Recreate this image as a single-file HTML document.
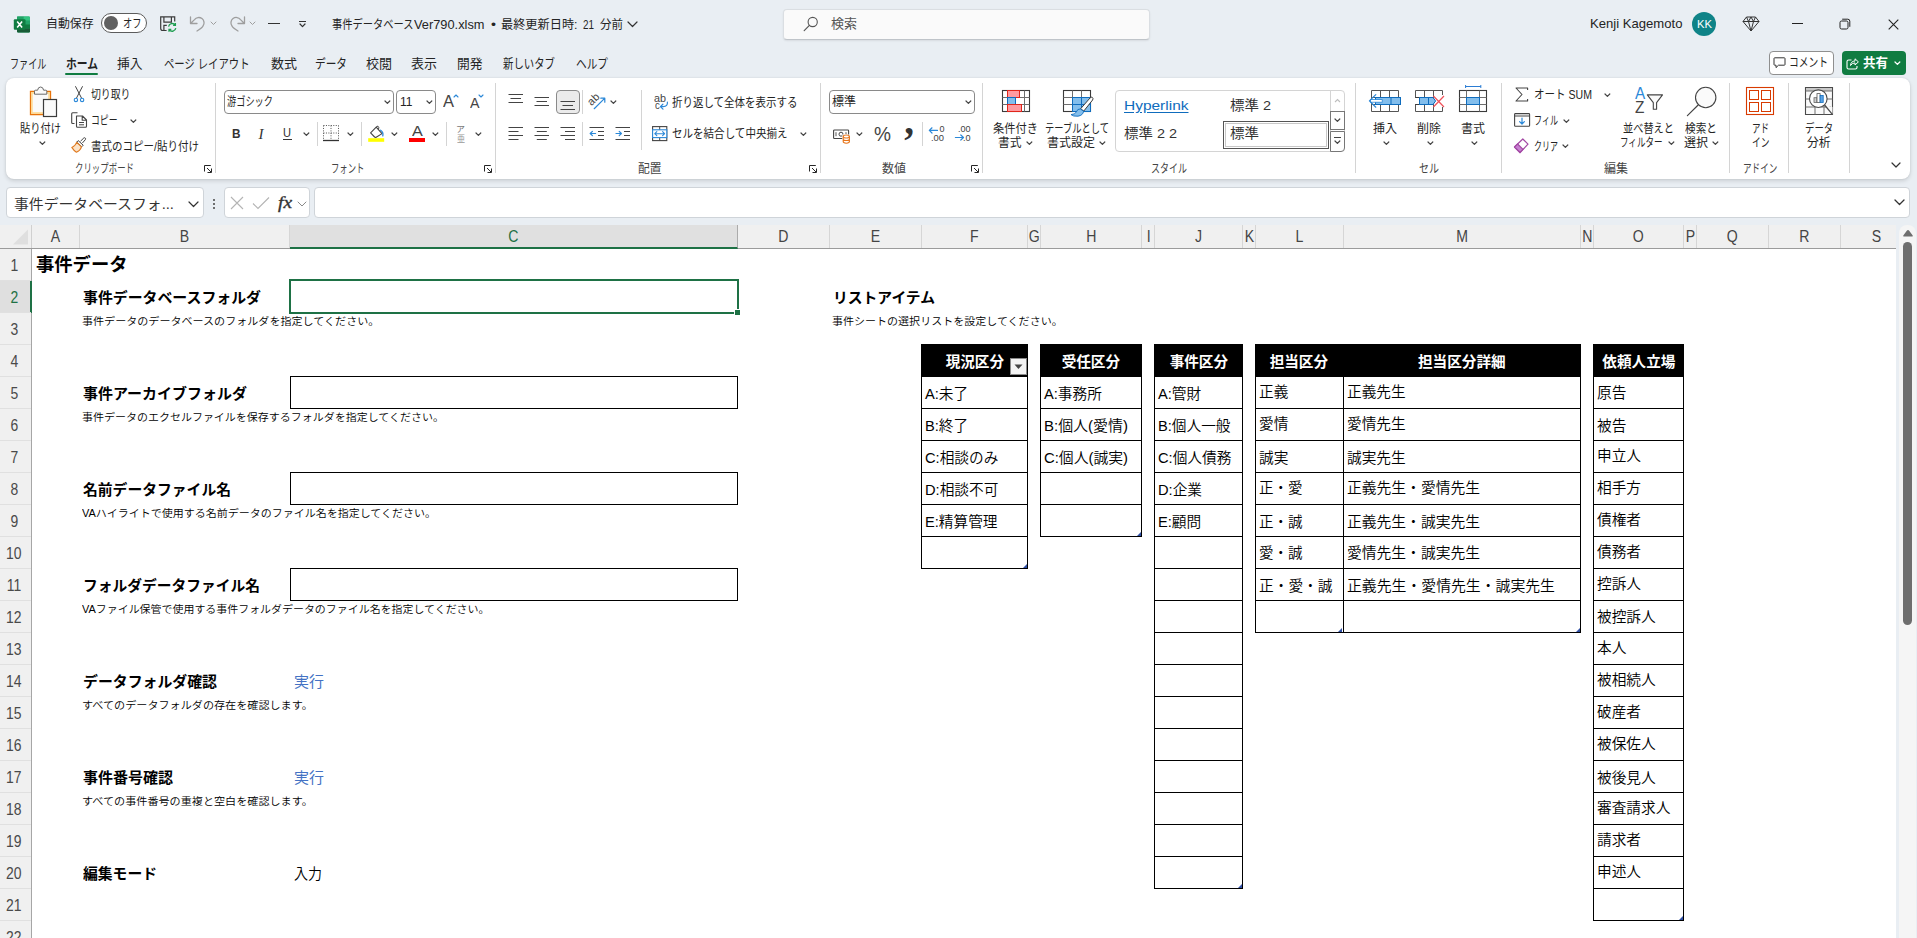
<!DOCTYPE html><html lang="ja"><head><meta charset="utf-8"><title>事件データベースVer790.xlsm - Excel</title><style>
html,body{margin:0;padding:0}
body{width:1917px;height:938px;overflow:hidden;position:relative;background:#e9eef3;font-family:"Liberation Sans","Noto Sans CJK JP",sans-serif;-webkit-font-smoothing:antialiased}
body>div,body>svg,body>span{position:absolute;box-sizing:border-box}
.t{white-space:nowrap;transform-origin:0 50%;display:block}
svg{overflow:visible}
</style></head><body><svg style="left:13px;top:15.5px;" width="18" height="17" viewBox="0 0 18 17" fill="none"><rect x="4" y="0.5" width="13" height="16" rx="1.2" fill="#21a366"/><rect x="4" y="0.5" width="6.8" height="4.2" fill="#21a366"/><path d="M10.6 0.5 H15.8 Q17 0.5 17 1.7 V4.7 H10.6 Z" fill="#33c481"/><rect x="4" y="4.6" width="6.8" height="4" fill="#107c41"/><rect x="10.6" y="4.6" width="6.4" height="4" fill="#21a366"/><rect x="4" y="8.5" width="6.8" height="4" fill="#185c37"/><rect x="10.6" y="8.5" width="6.4" height="4" fill="#107c41"/><path d="M4 12.4 H17 V15.3 Q17 16.5 15.8 16.5 H5.2 Q4 16.5 4 15.3 Z" fill="#185c37"/><rect x="0.8" y="3.3" width="11.7" height="10.4" rx="1" fill="#107c41"/><path d="M4.2 5.6 L9.1 11.4 M9.1 5.6 L4.2 11.4" stroke="#fff" stroke-width="1.6"/></svg>
<span class="t" style="left:46px;top:14.7px;line-height:19px;font-size:12.5px;font-weight:400;color:#242424;transform:scaleX(0.9517);">自動保存</span>
<div style="left:101px;top:13px;width:46px;height:20px;border:1.2px solid #5c5c5c;border-radius:10px;background:#fff"></div>
<div style="left:104px;top:16.1px;width:13.8px;height:13.8px;background:#616161;border-radius:50%"></div>
<span class="t" style="left:123px;top:15.0px;line-height:18px;font-size:12px;font-weight:400;color:#242424;transform:scaleX(0.7703);">オフ</span>
<svg style="left:160px;top:15px;" width="17" height="18" viewBox="0 0 17 18" fill="none"><path d="M6.6 15.5 H2.8 Q0.7 15.5 0.7 13.6 V1.9 H14.7 V6.4" stroke="#3b3b3b" stroke-width="1.2"/><path d="M3.9 2 V7.1 H11.4 V2" stroke="#3b3b3b" stroke-width="1.2"/><path d="M3.9 15.4 V10.4 H6.8" stroke="#3b3b3b" stroke-width="1.2"/><path d="M8.6 11.6 A3.7 3.7 0 0 1 15.1 9.9 M15.4 8.1 V10.4 H13.1 M15.8 13.2 A3.7 3.7 0 0 1 9.3 14.9 M9 16.7 V14.4 H11.3" stroke="#1e9e50" stroke-width="1.3"/></svg>
<svg style="left:189px;top:15px;" width="18" height="17" viewBox="0 0 18 17" fill="none"><path d="M1.5 2 V8.5 H8 M1.8 8.2 L5.5 4.6 A5.3 5.3 0 0 1 14 11 Q13 13 8 16" stroke="#9e9e9e" stroke-width="1.3" stroke-linecap="round" stroke-linejoin="round"/></svg>
<svg style="left:210.0px;top:21.25px;" width="7" height="4.5" viewBox="0 0 7 4.5" fill="none"><path d="M1 1 L3.5 3.5 L6 1" stroke="#9e9e9e" stroke-width="1" stroke-linecap="round" stroke-linejoin="round"/></svg>
<svg style="left:228px;top:15px;" width="18" height="17" viewBox="0 0 18 17" fill="none"><path d="M16.5 2 V8.5 H10 M16.2 8.2 L12.5 4.6 A5.3 5.3 0 0 0 4 11 Q5 13 10 16" stroke="#9e9e9e" stroke-width="1.3" stroke-linecap="round" stroke-linejoin="round"/></svg>
<svg style="left:249.0px;top:21.25px;" width="7" height="4.5" viewBox="0 0 7 4.5" fill="none"><path d="M1 1 L3.5 3.5 L6 1" stroke="#9e9e9e" stroke-width="1" stroke-linecap="round" stroke-linejoin="round"/></svg>
<div style="left:267.5px;top:23px;width:12px;height:1.3px;background:#333"></div>
<div style="left:299px;top:20.5px;width:7px;height:1.2px;background:#333"></div>
<svg style="left:299.0px;top:23.2px;" width="7" height="4.6" viewBox="0 0 7 4.6" fill="none"><path d="M1 1 L3.5 3.6 L6 1" stroke="#333" stroke-width="1.2" stroke-linecap="round" stroke-linejoin="round"/></svg>
<span class="t" style="left:331.5px;top:15.5px;line-height:19px;font-size:12.5px;font-weight:400;color:#242424;transform:scaleX(0.8200);">事件データベース</span>
<span class="t" style="left:413.5px;top:15.0px;line-height:20px;font-size:13px;font-weight:400;color:#242424;transform:scaleX(0.9854);">Ver790.xlsm</span>
<span class="t" style="left:490.5px;top:15.5px;line-height:19px;font-size:12.5px;font-weight:400;color:#242424;transform:scaleX(1.1388);">•</span>
<span class="t" style="left:501px;top:15.5px;line-height:19px;font-size:12.5px;font-weight:400;color:#242424;transform:scaleX(0.9747);">最終更新日時:</span>
<span class="t" style="left:582.5px;top:15.0px;line-height:20px;font-size:13px;font-weight:400;color:#242424;transform:scaleX(0.7603);">21</span>
<span class="t" style="left:599.5px;top:15.5px;line-height:19px;font-size:12.5px;font-weight:400;color:#242424;transform:scaleX(0.9194);">分前</span>
<svg style="left:627.0px;top:20.75px;" width="11" height="6.5" viewBox="0 0 11 6.5" fill="none"><path d="M1 1 L5.5 5.5 L10 1" stroke="#333" stroke-width="1.2" stroke-linecap="round" stroke-linejoin="round"/></svg>
<div style="left:782.5px;top:8.5px;width:367px;height:31px;background:#fafafa;border-radius:4px;border:1px solid #dadee2;border-bottom-color:#bfc4c9;box-shadow:0 1px 2px rgba(0,0,0,.08)"></div>
<svg style="left:803px;top:16px;" width="16" height="16" viewBox="0 0 16 16" fill="none"><circle cx="9.7" cy="6" r="4.6" stroke="#555" stroke-width="1.1"/><path d="M6.4 9.4 L1.2 14.6" stroke="#555" stroke-width="1.2" stroke-linecap="round"/></svg>
<span class="t" style="left:831px;top:13.5px;line-height:20px;font-size:13px;font-weight:400;color:#555;transform:scaleX(0.9994);">検索</span>
<span class="t" style="left:1590px;top:14.0px;line-height:20px;font-size:13px;font-weight:400;color:#242424;transform:scaleX(1.0078);">Kenji Kagemoto</span>
<div style="left:1691.5px;top:11.5px;width:24px;height:24px;background:#0f8387;border-radius:50%"></div>
<span class="t" style="left:1703.5px;top:16.0px;line-height:16px;font-size:10.5px;font-weight:400;color:#fff;transform:translateX(-50%) scaleX(1.0702);">KK</span>
<svg style="left:1742px;top:15.5px;" width="18" height="16" viewBox="0 0 18 16" fill="none"><path d="M4.5 1 H13.5 L17 5.5 L9 15 L1 5.5 Z M1 5.5 H17 M4.5 1 L6.5 5.5 L9 15 L11.5 5.5 L13.5 1 M6.5 5.5 L9 1 L11.5 5.5" stroke="#333" stroke-width="1" stroke-linejoin="round"/></svg>
<div style="left:1792px;top:23.3px;width:11px;height:1.1px;background:#222"></div>
<svg style="left:1839px;top:18px;" width="12" height="12" viewBox="0 0 12 12" fill="none"><rect x="1" y="3" width="8" height="8" rx="1.6" stroke="#222" stroke-width="1"/><path d="M3.2 1.2 H8.8 Q10.8 1.2 10.8 3.2 V8.8" stroke="#222" stroke-width="1"/></svg>
<svg style="left:1887.5px;top:18.5px;" width="11" height="11" viewBox="0 0 11 11" fill="none"><path d="M0.7 0.7 L10.3 10.3 M10.3 0.7 L0.7 10.3" stroke="#222" stroke-width="1.1"/></svg>
<span class="t" style="left:10px;top:54.0px;line-height:20px;font-size:13px;font-weight:400;color:#242424;transform:scaleX(0.7017);">ファイル</span>
<span class="t" style="left:65.5px;top:54.0px;line-height:20px;font-size:13px;font-weight:700;color:#242424;transform:scaleX(0.8285);">ホーム</span>
<span class="t" style="left:117px;top:54.0px;line-height:20px;font-size:13px;font-weight:400;color:#242424;transform:scaleX(0.9802);">挿入</span>
<span class="t" style="left:163.5px;top:54.0px;line-height:20px;font-size:13px;font-weight:400;color:#242424;transform:scaleX(0.7964);">ページ レイアウト</span>
<span class="t" style="left:270.5px;top:54.0px;line-height:20px;font-size:13px;font-weight:400;color:#242424;transform:scaleX(0.9994);">数式</span>
<span class="t" style="left:315px;top:54.0px;line-height:20px;font-size:13px;font-weight:400;color:#242424;transform:scaleX(0.8202);">データ</span>
<span class="t" style="left:366px;top:54.0px;line-height:20px;font-size:13px;font-weight:400;color:#242424;transform:scaleX(0.9994);">校閲</span>
<span class="t" style="left:411px;top:54.0px;line-height:20px;font-size:13px;font-weight:400;color:#242424;transform:scaleX(0.9994);">表示</span>
<span class="t" style="left:456.5px;top:54.0px;line-height:20px;font-size:13px;font-weight:400;color:#242424;transform:scaleX(0.9802);">開発</span>
<span class="t" style="left:503px;top:54.0px;line-height:20px;font-size:13px;font-weight:400;color:#242424;transform:scaleX(0.7998);">新しいタブ</span>
<span class="t" style="left:576px;top:54.0px;line-height:20px;font-size:13px;font-weight:400;color:#242424;transform:scaleX(0.8202);">ヘルプ</span>
<div style="left:65px;top:72.8px;width:33px;height:2.2px;background:#107c41;border-radius:1px"></div>
<div style="left:1769px;top:51px;width:64.5px;height:24px;background:#fff;border:1px solid #8f8f8f;border-radius:4px"></div>
<svg style="left:1773px;top:57px;" width="13" height="12" viewBox="0 0 13 12" fill="none"><path d="M1 1.5 Q1 0.8 1.7 0.8 H11.3 Q12 0.8 12 1.5 V7.5 Q12 8.2 11.3 8.2 H5.5 L3 10.6 V8.2 H1.7 Q1 8.2 1 7.5 Z" stroke="#333" stroke-width="1" stroke-linejoin="round"/></svg>
<span class="t" style="left:1788.5px;top:53.5px;line-height:19px;font-size:12.5px;font-weight:400;color:#242424;transform:scaleX(0.7798);">コメント</span>
<div style="left:1841.5px;top:51px;width:64px;height:24px;background:#107c41;border-radius:4px"></div>
<svg style="left:1845.5px;top:56.5px;" width="13" height="13" viewBox="0 0 13 13" fill="none"><path d="M5.5 3 H2.6 Q1 3 1 4.6 V10.4 Q1 12 2.6 12 H9.4 Q11 12 11 10.4 V9" stroke="#fff" stroke-width="1.1"/><path d="M4.5 8.5 Q4.8 4.2 9 4 V1.8 L12.4 4.9 L9 8 V5.9 Q6 6 4.5 8.5 Z" stroke="#fff" stroke-width="1" stroke-linejoin="round"/></svg>
<span class="t" style="left:1862.5px;top:53.0px;line-height:20px;font-size:13px;font-weight:700;color:#fff;transform:scaleX(0.9610);">共有</span>
<svg style="left:1894.3px;top:61.3px;" width="6.8" height="4.4" viewBox="0 0 6.8 4.4" fill="none"><path d="M1 1 L3.4 3.4 L5.8 1" stroke="#fff" stroke-width="1.3" stroke-linecap="round" stroke-linejoin="round"/></svg>
<div style="left:6px;top:78px;width:1904px;height:101px;background:#fff;border-radius:8px;box-shadow:0 2px 4px rgba(0,0,0,.13),0 0 2px rgba(0,0,0,.10)"></div>
<div style="left:6px;top:187px;width:197.5px;height:30.5px;background:#fff;border-radius:4px;border:1px solid #cfd4d9"></div>
<span class="t" style="left:13.5px;top:194.0px;line-height:21px;font-size:14px;font-weight:400;color:#333;transform:scaleX(1.0598);">事件データベースフォ...</span>
<svg style="left:188.0px;top:201.25px;" width="11" height="6.5" viewBox="0 0 11 6.5" fill="none"><path d="M1 1 L5.5 5.5 L10 1" stroke="#333" stroke-width="1.2" stroke-linecap="round" stroke-linejoin="round"/></svg>
<div style="left:212.5px;top:199px;width:2px;height:2px;background:#444;border-radius:50%"></div>
<div style="left:212.5px;top:203px;width:2px;height:2px;background:#444;border-radius:50%"></div>
<div style="left:212.5px;top:207px;width:2px;height:2px;background:#444;border-radius:50%"></div>
<div style="left:224px;top:187px;width:85.5px;height:30.5px;background:#fff;border-radius:4px;border:1px solid #cfd4d9"></div>
<svg style="left:230px;top:196px;" width="14" height="14" viewBox="0 0 14 14" fill="none"><path d="M1 1 L13 13 M13 1 L1 13" stroke="#b4b4b4" stroke-width="1.1"/></svg>
<svg style="left:252px;top:196px;" width="18" height="14" viewBox="0 0 18 14" fill="none"><path d="M1 7.5 L6 12.5 L17 1.5" stroke="#b4b4b4" stroke-width="1.1"/></svg>
<span class="t" style="left:277.5px;top:190.5px;line-height:24px;font-size:16px;font-weight:400;color:#333;transform:scaleX(1.2124);font-family:'Liberation Serif',serif;-webkit-text-stroke:0.35px #333;"><i>fx</i></span>
<svg style="left:296.7px;top:201.0px;" width="10" height="6" viewBox="0 0 10 6" fill="none"><path d="M1 1 L5.0 5 L9 1" stroke="#8a8a8a" stroke-width="1" stroke-linecap="round" stroke-linejoin="round"/></svg>
<div style="left:314px;top:187px;width:1595.5px;height:30.5px;background:#fff;border-radius:4px;border:1px solid #cfd4d9"></div>
<svg style="left:1894.0px;top:198.75px;" width="11" height="6.5" viewBox="0 0 11 6.5" fill="none"><path d="M1 1 L5.5 5.5 L10 1" stroke="#333" stroke-width="1.3" stroke-linecap="round" stroke-linejoin="round"/></svg>
<svg style="left:29px;top:86px;" width="29" height="31" viewBox="0 0 29 31" fill="none"><path d="M14.5 28.5 H1.5 V5.5 H21.5 V13" stroke="#e8740c" stroke-width="1.3" fill="#fafafa"/><path d="M14 27.1 H2.9 V6.9 H20.1 V13" stroke="#ffd88a" stroke-width="1.5"/><path d="M5.5 8.2 V5.2 Q5.5 4.2 6.5 4.2 H8.6 Q9 1 11.6 1 Q14.2 1 14.6 4.2 H16.8 Q17.8 4.2 17.8 5.2 V8.2 Z" stroke="#6a6a6a" stroke-width="1" fill="#fafafa"/><rect x="14.5" y="13.5" width="13" height="17" stroke="#3b3b3b" stroke-width="1.2" fill="#fafafa"/></svg>
<span class="t" style="left:20px;top:120.19999999999999px;line-height:18px;font-size:12px;font-weight:400;color:#242424;transform:scaleX(0.8539);">貼り付け</span>
<svg style="left:39.300000000000004px;top:141.0px;" width="6.8" height="4.4" viewBox="0 0 6.8 4.4" fill="none"><path d="M1 1 L3.4 3.4 L5.8 1" stroke="#444" stroke-width="1.2" stroke-linecap="round" stroke-linejoin="round"/></svg>
<svg style="left:72px;top:86px;" width="14" height="17" viewBox="0 0 14 17" fill="none"><path d="M3.6 0.6 L9.6 12.2 M10.4 0.6 L4.4 12.2" stroke="#444" stroke-width="1" stroke-linecap="round"/><circle cx="3.9" cy="13.9" r="1.7" stroke="#2b88d8" stroke-width="1.1" fill="#fff"/><circle cx="10.1" cy="13.9" r="1.7" stroke="#2b88d8" stroke-width="1.1" fill="#fff"/></svg>
<span class="t" style="left:91px;top:86.2px;line-height:18px;font-size:12px;font-weight:400;color:#242424;transform:scaleX(0.8226);">切り取り</span>
<svg style="left:71px;top:112px;" width="17" height="16" viewBox="0 0 17 16" fill="none"><path d="M3.5 11.5 H1.7 Q0.7 11.5 0.7 10.5 V1.7 Q0.7 0.7 1.7 0.7 H6.5" stroke="#444" stroke-width="1.1"/><path d="M5.5 4 H11.5 L15.5 8 V14.3 Q15.5 15.3 14.5 15.3 H6.5 Q5.5 15.3 5.5 14.3 Z M11.2 4.2 V8.2 H15.3" stroke="#444" stroke-width="1.1" fill="#fff" stroke-linejoin="round"/><path d="M8 10.5 H13 M8 12.8 H13" stroke="#444" stroke-width="1"/></svg>
<span class="t" style="left:90.5px;top:112.2px;line-height:18px;font-size:12px;font-weight:400;color:#242424;transform:scaleX(0.7358);">コピー</span>
<svg style="left:129.9px;top:118.6px;" width="6.8" height="4.4" viewBox="0 0 6.8 4.4" fill="none"><path d="M1 1 L3.4 3.4 L5.8 1" stroke="#444" stroke-width="1.2" stroke-linecap="round" stroke-linejoin="round"/></svg>
<svg style="left:71px;top:137px;" width="16" height="16" viewBox="0 0 16 16" fill="none"><path d="M9.5 4.2 L12.8 1 Q13.6 0.4 14.3 1.1 Q15 1.8 14.4 2.6 L11.4 6" stroke="#444" stroke-width="1"/><path d="M7.2 3.6 L12.2 8.2 L10.7 9.8 L5.7 5.2 Z" stroke="#444" stroke-width="1" fill="#fff"/><path d="M5.7 5.4 L10.5 9.9 Q9.2 13.8 5.4 15.2 Q2.6 13.4 0.8 10.4 Q4.2 9.2 5.7 5.4 Z" stroke="#e07a1f" stroke-width="1.1" fill="#fbe3c8" stroke-linejoin="round"/></svg>
<span class="t" style="left:90.5px;top:137.7px;line-height:18px;font-size:12px;font-weight:400;color:#242424;transform:scaleX(0.8756);">書式のコピー/貼り付け</span>
<span class="t" style="left:75px;top:159.5px;line-height:18px;font-size:12px;font-weight:400;color:#444;transform:scaleX(0.7023);">クリップボード</span>
<svg style="left:204px;top:165px;" width="8" height="8" viewBox="0 0 8 8" fill="none"><path d="M0.5 6.5 V0.5 H6.8 M3 3 L7 7 M7.5 3.5 V7.5 H3.5" stroke="#262626" stroke-width="1"/></svg>
<div style="left:215px;top:83px;width:1px;height:90px;background:#d4d4d4"></div>
<div style="left:224px;top:90px;width:169.5px;height:24px;border:1px solid #8a8a8a;border-radius:4px;background:#fff"></div>
<span class="t" style="left:226.5px;top:93.2px;line-height:18px;font-size:12px;font-weight:400;color:#242424;transform:scaleX(0.7665);">游ゴシック</span>
<svg style="left:383.6px;top:99.8px;" width="6.8" height="4.4" viewBox="0 0 6.8 4.4" fill="none"><path d="M1 1 L3.4 3.4 L5.8 1" stroke="#444" stroke-width="1.2" stroke-linecap="round" stroke-linejoin="round"/></svg>
<div style="left:395.5px;top:90px;width:40px;height:24px;border:1px solid #8a8a8a;border-radius:4px;background:#fff"></div>
<span class="t" style="left:399.5px;top:91.5px;line-height:20px;font-size:13px;font-weight:400;color:#242424;transform:scaleX(0.9259);">11</span>
<svg style="left:425.6px;top:99.8px;" width="6.8" height="4.4" viewBox="0 0 6.8 4.4" fill="none"><path d="M1 1 L3.4 3.4 L5.8 1" stroke="#444" stroke-width="1.2" stroke-linecap="round" stroke-linejoin="round"/></svg>
<span class="t" style="left:442.5px;top:88.5px;line-height:26px;font-size:17px;font-weight:400;color:#444;transform:scaleX(0.9697);">A</span>
<svg style="left:452.7px;top:94px;" width="6" height="4" viewBox="0 0 6 4" fill="none"><path d="M1 3 L3 1 L5 3" stroke="#2b88d8" stroke-width="1.1" stroke-linecap="round" stroke-linejoin="round"/></svg>
<span class="t" style="left:470px;top:91.5px;line-height:22px;font-size:14.5px;font-weight:400;color:#444;transform:scaleX(0.9822);">A</span>
<svg style="left:478.4px;top:94.3px;" width="6" height="4" viewBox="0 0 6 4" fill="none"><path d="M1 1 L3.0 3 L5 1" stroke="#2b88d8" stroke-width="1.1" stroke-linecap="round" stroke-linejoin="round"/></svg>
<span class="t" style="left:232px;top:123.5px;line-height:20px;font-size:13.5px;font-weight:700;color:#333;transform:scaleX(0.8718);">B</span>
<span class="t" style="left:258.5px;top:122.5px;line-height:22px;font-size:15px;font-weight:400;color:#333;font-family:'Liberation Serif',serif;"><i>I</i></span>
<span class="t" style="left:283px;top:123.0px;line-height:20px;font-size:13px;font-weight:400;color:#333;transform:scaleX(0.8519);">U</span>
<div style="left:282.5px;top:139px;width:9px;height:1px;background:#333"></div>
<svg style="left:302.6px;top:132.3px;" width="6.8" height="4.4" viewBox="0 0 6.8 4.4" fill="none"><path d="M1 1 L3.4 3.4 L5.8 1" stroke="#444" stroke-width="1.2" stroke-linecap="round" stroke-linejoin="round"/></svg>
<div style="left:317px;top:122px;width:1px;height:23.5px;background:#d4d4d4"></div>
<svg style="left:323px;top:125px;" width="16" height="16" viewBox="0 0 16 16" fill="none"><path d="M0.5 0.5 H15.5 M0.5 0.5 V15 M15.5 0.5 V15 M8 0.5 V15 M0.5 8 H15.5" stroke="#555" stroke-width="1" stroke-dasharray="1 1.45"/><path d="M0 15.5 H16" stroke="#333" stroke-width="1.3"/></svg>
<svg style="left:346.6px;top:132.3px;" width="6.8" height="4.4" viewBox="0 0 6.8 4.4" fill="none"><path d="M1 1 L3.4 3.4 L5.8 1" stroke="#444" stroke-width="1.2" stroke-linecap="round" stroke-linejoin="round"/></svg>
<div style="left:361px;top:122px;width:1px;height:23.5px;background:#d4d4d4"></div>
<svg style="left:368px;top:125px;" width="17" height="18" viewBox="0 0 17 18" fill="none"><path d="M2.6 7.8 L8.2 2.2 L14 8.6 L8.2 12.2 Q7.4 12.6 6.6 12 Z" stroke="#444" stroke-width="1.1" fill="#fff" stroke-linejoin="round"/><path d="M8.2 2.2 Q8.8 0.6 10.2 1.4 Q11.4 2.4 10.4 4.6" stroke="#444" stroke-width="1"/><path d="M12.6 5.2 Q15.6 7 14.8 10.8" stroke="#2b88d8" stroke-width="1.3" stroke-linecap="round"/><rect x="0.2" y="13.2" width="16" height="3.6" fill="#ffff00"/></svg>
<svg style="left:390.6px;top:132.3px;" width="6.8" height="4.4" viewBox="0 0 6.8 4.4" fill="none"><path d="M1 1 L3.4 3.4 L5.8 1" stroke="#444" stroke-width="1.2" stroke-linecap="round" stroke-linejoin="round"/></svg>
<span class="t" style="left:411.8px;top:120.30000000000001px;line-height:22px;font-size:14.5px;font-weight:400;color:#444;transform:scaleX(1.1166);">A</span>
<div style="left:409px;top:138.2px;width:16px;height:3.6px;background:#ff0000"></div>
<svg style="left:431.6px;top:132.3px;" width="6.8" height="4.4" viewBox="0 0 6.8 4.4" fill="none"><path d="M1 1 L3.4 3.4 L5.8 1" stroke="#444" stroke-width="1.2" stroke-linecap="round" stroke-linejoin="round"/></svg>
<div style="left:445.5px;top:122px;width:1px;height:23.5px;background:#d4d4d4"></div>
<span class="t" style="left:456px;top:123.0px;line-height:13px;font-size:8.5px;font-weight:400;color:#777;transform:scaleX(1.0569);">ア</span>
<span class="t" style="left:456.5px;top:131.5px;line-height:14px;font-size:9px;font-weight:400;color:#999;transform:scaleX(0.8873);">亜</span>
<svg style="left:475.1px;top:132.3px;" width="6.8" height="4.4" viewBox="0 0 6.8 4.4" fill="none"><path d="M1 1 L3.4 3.4 L5.8 1" stroke="#444" stroke-width="1.2" stroke-linecap="round" stroke-linejoin="round"/></svg>
<span class="t" style="left:330.5px;top:159.5px;line-height:18px;font-size:12px;font-weight:400;color:#444;transform:scaleX(0.6977);">フォント</span>
<svg style="left:484px;top:165px;" width="8" height="8" viewBox="0 0 8 8" fill="none"><path d="M0.5 6.5 V0.5 H6.8 M3 3 L7 7 M7.5 3.5 V7.5 H3.5" stroke="#262626" stroke-width="1"/></svg>
<div style="left:495px;top:83px;width:1px;height:90px;background:#d4d4d4"></div>
<svg style="left:508px;top:92px;" width="16" height="16" viewBox="0 0 16 16" fill="none"><path d="M0.5 2.5 H15 M2.5 6.5 H13 M0.5 10.5 H15 " stroke="#444" stroke-width="1.1"/></svg>
<svg style="left:534px;top:92px;" width="16" height="16" viewBox="0 0 16 16" fill="none"><path d="M0.5 5.5 H15 M2.5 9.5 H13 M0.5 13.5 H15 " stroke="#444" stroke-width="1.1"/></svg>
<div style="left:555.5px;top:90px;width:24.5px;height:24px;background:#ebebeb;border:1px solid #8a8a8a;border-radius:4px"></div>
<svg style="left:560px;top:94px;" width="16" height="16" viewBox="0 0 16 16" fill="none"><path d="M0.5 7.5 H15 M2.5 11.5 H13 M0.5 15.5 H15 " stroke="#444" stroke-width="1.1"/></svg>
<div style="left:582px;top:90px;width:1px;height:24px;background:#d4d4d4"></div>
<svg style="left:588px;top:92px;" width="18" height="18" viewBox="0 0 18 18" fill="none"><path d="M6.2 16.7 L16.6 6.4 M12.8 6.2 H16.8 V10.2" stroke="#2b88d8" stroke-width="1.2" stroke-linecap="round" stroke-linejoin="round"/></svg>
<span class="t" style="left:587.4px;top:90.6px;line-height:16px;font-size:11px;font-weight:400;color:#444;transform-origin:50% 50%;transform:rotate(-45deg);">ab</span>
<svg style="left:610.0px;top:100.39999999999999px;" width="6.8" height="4.4" viewBox="0 0 6.8 4.4" fill="none"><path d="M1 1 L3.4 3.4 L5.8 1" stroke="#444" stroke-width="1.2" stroke-linecap="round" stroke-linejoin="round"/></svg>
<div style="left:641px;top:89.5px;width:1px;height:60.5px;background:#d4d4d4"></div>
<span class="t" style="left:654px;top:90.0px;line-height:16px;font-size:10.5px;font-weight:400;color:#444;transform:scaleX(1.0267);">ab</span>
<span class="t" style="left:654.5px;top:97.0px;line-height:16px;font-size:10.5px;font-weight:400;color:#444;transform:scaleX(0.9143);">c</span>
<svg style="left:659px;top:100px;" width="10" height="11" viewBox="0 0 10 11" fill="none"><path d="M8.4 2.2 Q8.9 6.4 4.2 6.6 H1.6 M3.9 4.2 L1.4 6.6 L4 9.2" stroke="#2b88d8" stroke-width="1.2" stroke-linecap="round" stroke-linejoin="round"/></svg>
<span class="t" style="left:672px;top:94.2px;line-height:18px;font-size:12px;font-weight:400;color:#242424;transform:scaleX(0.8736);">折り返して全体を表示する</span>
<svg style="left:508px;top:126px;" width="16" height="16" viewBox="0 0 16 16" fill="none"><path d="M0.5 1.5 H15 M0.5 5.5 H10.5 M0.5 9.5 H15 M0.5 13.5 H10.5 " stroke="#444" stroke-width="1.1"/></svg>
<svg style="left:534px;top:126px;" width="16" height="16" viewBox="0 0 16 16" fill="none"><path d="M0.5 1.5 H15 M2.8 5.5 H12.8 M0.5 9.5 H15 M2.8 13.5 H12.8 " stroke="#444" stroke-width="1.1"/></svg>
<svg style="left:560px;top:126px;" width="16" height="16" viewBox="0 0 16 16" fill="none"><path d="M0.5 1.5 H15 M5 5.5 H15 M0.5 9.5 H15 M5 13.5 H15 " stroke="#444" stroke-width="1.1"/></svg>
<div style="left:582px;top:122px;width:1px;height:23.5px;background:#d4d4d4"></div>
<svg style="left:589px;top:127px;" width="16" height="14" viewBox="0 0 16 14" fill="none"><path d="M0.5 0.5 H15 M9 4.5 H15 M9 8.5 H15 M0.5 12.5 H15" stroke="#444" stroke-width="1.1"/><path d="M6.6 6.5 H1.4 M3.4 4.3 L1.2 6.5 L3.4 8.7" stroke="#2b88d8" stroke-width="1.2" stroke-linecap="round" stroke-linejoin="round"/></svg>
<svg style="left:615px;top:127px;" width="16" height="14" viewBox="0 0 16 14" fill="none"><path d="M0.5 0.5 H15 M9 4.5 H15 M9 8.5 H15 M0.5 12.5 H15" stroke="#444" stroke-width="1.1"/><path d="M1 6.5 H6.2 M4.2 4.3 L6.4 6.5 L4.2 8.7" stroke="#2b88d8" stroke-width="1.2" stroke-linecap="round" stroke-linejoin="round"/></svg>
<svg style="left:651.5px;top:126px;" width="17" height="16" viewBox="0 0 17 16" fill="none"><rect x="0.6" y="0.6" width="14.2" height="14" stroke="#444" stroke-width="1.1"/><path d="M7.7 0.6 V4 M7.7 11.4 V14.6" stroke="#444" stroke-width="1"/><rect x="0.6" y="3.8" width="14.2" height="7.8" stroke="#2b88d8" stroke-width="1.1" fill="#fff"/><path d="M2.8 7.7 H12.6 M4.8 5.7 L2.8 7.7 L4.8 9.7 M10.6 5.7 L12.6 7.7 L10.6 9.7" stroke="#2b88d8" stroke-width="1.1" stroke-linecap="round" stroke-linejoin="round"/></svg>
<span class="t" style="left:672px;top:125.19999999999999px;line-height:18px;font-size:12px;font-weight:400;color:#242424;transform:scaleX(0.8773);">セルを結合して中央揃え</span>
<svg style="left:799.6px;top:132.3px;" width="6.8" height="4.4" viewBox="0 0 6.8 4.4" fill="none"><path d="M1 1 L3.4 3.4 L5.8 1" stroke="#444" stroke-width="1.2" stroke-linecap="round" stroke-linejoin="round"/></svg>
<span class="t" style="left:638px;top:159.5px;line-height:18px;font-size:12px;font-weight:400;color:#444;transform:scaleX(0.9785);">配置</span>
<svg style="left:809px;top:165px;" width="8" height="8" viewBox="0 0 8 8" fill="none"><path d="M0.5 6.5 V0.5 H6.8 M3 3 L7 7 M7.5 3.5 V7.5 H3.5" stroke="#262626" stroke-width="1"/></svg>
<div style="left:820px;top:83px;width:1px;height:90px;background:#d4d4d4"></div>
<div style="left:829px;top:90px;width:146px;height:24px;border:1px solid #8a8a8a;border-radius:4px;background:#fff"></div>
<span class="t" style="left:832px;top:93.2px;line-height:18px;font-size:12px;font-weight:400;color:#242424;transform:scaleX(0.9993);">標準</span>
<svg style="left:964.6px;top:99.8px;" width="6.8" height="4.4" viewBox="0 0 6.8 4.4" fill="none"><path d="M1 1 L3.4 3.4 L5.8 1" stroke="#444" stroke-width="1.2" stroke-linecap="round" stroke-linejoin="round"/></svg>
<svg style="left:833px;top:128.6px;" width="18" height="15" viewBox="0 0 18 15" fill="none"><rect x="0.6" y="1" width="15" height="8.5" rx="0.8" stroke="#444" stroke-width="1.1"/><circle cx="8" cy="5.2" r="2" stroke="#444" stroke-width="1"/><path d="M3 3.2 V7.2 M13 3.2 V5" stroke="#444" stroke-width="0.9"/><rect x="9.3" y="5.5" width="7.5" height="9" fill="#fff"/><path d="M10.2 7.5 V12.6 Q10.2 14.2 13.3 14.2 Q16.4 14.2 16.4 12.6 V7.5 M10.2 10 Q10.2 11.5 13.3 11.5 Q16.4 11.5 16.4 10" stroke="#e8751a" stroke-width="1.1"/><ellipse cx="13.3" cy="7.5" rx="3.1" ry="1.5" stroke="#e8751a" stroke-width="1.1"/></svg>
<svg style="left:856.1px;top:132.3px;" width="6.8" height="4.4" viewBox="0 0 6.8 4.4" fill="none"><path d="M1 1 L3.4 3.4 L5.8 1" stroke="#444" stroke-width="1.2" stroke-linecap="round" stroke-linejoin="round"/></svg>
<span class="t" style="left:873.5px;top:118.5px;line-height:30px;font-size:20px;font-weight:400;color:#444;transform:scaleX(0.9552);">%</span>
<span class="t" style="left:904.3px;top:92.3px;line-height:58px;font-size:39px;font-weight:700;color:#333;font-family:'Liberation Serif',serif;">,</span>
<div style="left:922px;top:122px;width:1px;height:23.5px;background:#d4d4d4"></div>
<svg style="left:928px;top:125px;" width="17" height="18" viewBox="0 0 17 18" fill="none"><path d="M9.5 5.4 H1.5 M4 2.8 L1.3 5.4 L4 8" stroke="#2b88d8" stroke-width="1.2" stroke-linecap="round" stroke-linejoin="round"/></svg>
<span class="t" style="left:939.6px;top:122.19999999999999px;line-height:14px;font-size:9px;font-weight:400;color:#444;">0</span>
<span class="t" style="left:931.3px;top:130.7px;line-height:14px;font-size:9px;font-weight:400;color:#444;transform:scaleX(1.0387);">.00</span>
<svg style="left:955px;top:125px;" width="17" height="18" viewBox="0 0 17 18" fill="none"><path d="M0.4 12.5 H8.2 M5.8 10 L8.5 12.5 L5.8 15" stroke="#2b88d8" stroke-width="1.2" stroke-linecap="round" stroke-linejoin="round"/></svg>
<span class="t" style="left:957.6px;top:122.19999999999999px;line-height:14px;font-size:9px;font-weight:400;color:#444;transform:scaleX(1.0067);">.00</span>
<span class="t" style="left:962.6px;top:130.7px;line-height:14px;font-size:9px;font-weight:400;color:#444;transform:scaleX(1.0112);">.0</span>
<span class="t" style="left:882px;top:159.5px;line-height:18px;font-size:12px;font-weight:400;color:#444;transform:scaleX(0.9993);">数値</span>
<svg style="left:971px;top:165px;" width="8" height="8" viewBox="0 0 8 8" fill="none"><path d="M0.5 6.5 V0.5 H6.8 M3 3 L7 7 M7.5 3.5 V7.5 H3.5" stroke="#262626" stroke-width="1"/></svg>
<div style="left:982px;top:83px;width:1px;height:90px;background:#d4d4d4"></div>
<svg style="left:1002px;top:90px;" width="28" height="22" viewBox="0 0 28 22" fill="none"><rect x="0.5" y="0.5" width="27" height="21" fill="#fff" stroke="#3b3b3b" stroke-width="1.1"/><path d="M0.5 7.5 H27.5 M0.5 14.5 H27.5 M5.5 0.5 V21.5 M22.5 0.5 V21.5" stroke="#6e6e6e" stroke-width="1"/><rect x="5.5" y="0.5" width="12" height="7" fill="#ff9aa0" stroke="#e0261b" stroke-width="1"/><rect x="5.5" y="7.5" width="8" height="7" fill="#83beec" stroke="#0f6cbd" stroke-width="1"/><rect x="5.5" y="14.5" width="14" height="7" fill="#ff9aa0" stroke="#e0261b" stroke-width="1"/></svg>
<span class="t" style="left:992.5px;top:119.69999999999999px;line-height:18px;font-size:12px;font-weight:400;color:#242424;transform:scaleX(0.9372);">条件付き</span>
<span class="t" style="left:998px;top:134.2px;line-height:18px;font-size:12px;font-weight:400;color:#242424;transform:scaleX(0.9785);">書式</span>
<svg style="left:1025.8999999999999px;top:141.0px;" width="6.8" height="4.4" viewBox="0 0 6.8 4.4" fill="none"><path d="M1 1 L3.4 3.4 L5.8 1" stroke="#444" stroke-width="1.2" stroke-linecap="round" stroke-linejoin="round"/></svg>
<svg style="left:1063px;top:90px;" width="31" height="27" viewBox="0 0 31 27" fill="none"><rect x="0.5" y="0.5" width="27" height="21" fill="#fff" stroke="#3b3b3b" stroke-width="1.1"/><path d="M0.5 7.5 H27.5 M0.5 14.5 H27.5 M9.5 0.5 V21.5 M18.5 0.5 V21.5" stroke="#6e6e6e" stroke-width="1"/><rect x="9.5" y="7.5" width="18" height="14" fill="#83beec" stroke="#0f6cbd" stroke-width="1"/><path d="M9.5 14.5 H27.5 M18.5 7.5 V21.5" stroke="#0f6cbd" stroke-width="1"/><path d="M29.3 7.4 Q30.6 8.6 29.6 10 L20.8 21 L17.6 18.8 L27 8 Q28.2 6.6 29.3 7.4 Z" fill="#fff" stroke="#3b3b3b" stroke-width="1"/><path d="M17.4 19 L20.6 21.2 Q20 25.4 15 26.2 Q10 26.6 8 24.6 Q12.6 24.4 13.4 21.8 Q14.4 18.6 17.4 19 Z" fill="#83beec" stroke="#0f6cbd" stroke-width="0.9"/></svg>
<span class="t" style="left:1044.5px;top:119.69999999999999px;line-height:18px;font-size:12px;font-weight:400;color:#242424;transform:scaleX(0.7718);">テーブルとして</span>
<span class="t" style="left:1047px;top:134.2px;line-height:18px;font-size:12px;font-weight:400;color:#242424;transform:scaleX(0.9997);">書式設定</span>
<svg style="left:1099.1px;top:141.0px;" width="6.8" height="4.4" viewBox="0 0 6.8 4.4" fill="none"><path d="M1 1 L3.4 3.4 L5.8 1" stroke="#444" stroke-width="1.2" stroke-linecap="round" stroke-linejoin="round"/></svg>
<div style="left:1115px;top:90px;width:229.5px;height:61.5px;border:1px solid #d4d4d4;border-radius:4px;background:#fff"></div>
<span class="t" style="left:1124px;top:95.5px;line-height:20px;font-size:13.5px;font-weight:400;color:#0f6cbd;transform:scaleX(1.1460);text-decoration:underline;text-underline-offset:2px;">Hyperlink</span>
<span class="t" style="left:1230px;top:95.8px;line-height:20px;font-size:13.33px;font-weight:400;color:#333;transform:scaleX(1.0852);">標準 2</span>
<span class="t" style="left:1124px;top:123.80000000000001px;line-height:20px;font-size:13.33px;font-weight:400;color:#333;transform:scaleX(1.0841);">標準 2 2</span>
<div style="left:1222.5px;top:121px;width:106.5px;height:28px;border:1px solid #555;background:#fff"></div>
<div style="left:1224.5px;top:123px;width:102.5px;height:24px;border:1px solid #c8c8c8"></div>
<span class="t" style="left:1230px;top:123.80000000000001px;line-height:20px;font-size:13.33px;font-weight:400;color:#333;transform:scaleX(1.0879);">標準</span>
<div style="left:1330px;top:90px;width:14.5px;height:61.5px;border-left:1px solid #d4d4d4"></div>
<svg style="left:1333.8px;top:97.5px;" width="7" height="5" viewBox="0 0 7 5" fill="none"><path d="M1 4 L3.5 1.5 L6 4" stroke="#bdbdbd" stroke-width="1.1"/></svg>
<div style="left:1330px;top:111px;width:14.5px;height:18.5px;border:1px solid #777;background:#fff"></div>
<svg style="left:1333.8px;top:118.3px;" width="6.8" height="4.4" viewBox="0 0 6.8 4.4" fill="none"><path d="M1 1 L3.4 3.4 L5.8 1" stroke="#444" stroke-width="1.2" stroke-linecap="round" stroke-linejoin="round"/></svg>
<div style="left:1330px;top:130.5px;width:14.5px;height:21px;border:1px solid #777;border-radius:0 0 4px 0;background:#fff"></div>
<div style="left:1334px;top:137px;width:6.5px;height:1.1px;background:#444"></div>
<svg style="left:1333.8px;top:139.8px;" width="6.8" height="4.4" viewBox="0 0 6.8 4.4" fill="none"><path d="M1 1 L3.4 3.4 L5.8 1" stroke="#444" stroke-width="1.2" stroke-linecap="round" stroke-linejoin="round"/></svg>
<span class="t" style="left:1150.5px;top:159.5px;line-height:18px;font-size:12px;font-weight:400;color:#444;transform:scaleX(0.7498);">スタイル</span>
<div style="left:1355px;top:83px;width:1px;height:90px;background:#d4d4d4"></div>
<svg style="left:1368px;top:90px;" width="34" height="22" viewBox="0 0 34 22" fill="none"><g transform="translate(3,0)"><path d="M0.5 0.5 H27.5 V21.5 H0.5 Z M9.5 0.5 V21.5 M18.5 0.5 V21.5 M0.5 7.5 H27.5 M0.5 14.5 H27.5 " stroke="#555" stroke-width="1"/></g><rect x="7.5" y="7.5" width="25" height="7" fill="#83beec" stroke="#0f6cbd" stroke-width="1"/><path d="M23 7.5 V14.5" stroke="#0f6cbd" stroke-width="1"/><rect x="2.6" y="9.6" width="11.6" height="2.6" fill="#fff" stroke="#2b88d8" stroke-width="0.8"/><path d="M7.8 4.6 L1.4 10.9 L7.8 17.2" stroke="#2b88d8" stroke-width="1.2" stroke-linecap="round" stroke-linejoin="round"/></svg>
<span class="t" style="left:1372.5px;top:119.69999999999999px;line-height:18px;font-size:12px;font-weight:400;color:#242424;transform:scaleX(0.9993);">挿入</span>
<svg style="left:1383.3px;top:141.0px;" width="6.8" height="4.4" viewBox="0 0 6.8 4.4" fill="none"><path d="M1 1 L3.4 3.4 L5.8 1" stroke="#444" stroke-width="1.2" stroke-linecap="round" stroke-linejoin="round"/></svg>
<svg style="left:1415px;top:90px;" width="31" height="22" viewBox="0 0 31 22" fill="none"><path d="M0.5 0.5 H27.5 V21.5 H0.5 Z M9.5 0.5 V21.5 M18.5 0.5 V21.5 M0.5 7.5 H27.5 M0.5 14.5 H27.5 " stroke="#555" stroke-width="1"/><rect x="-0.5" y="8" width="4.5" height="6" fill="#fff"/><rect x="19" y="5" width="11" height="12" fill="#fff"/><path d="M0.5 7.5 H4 M0.5 14.5 H4" stroke="#3b3b3b" stroke-width="1"/><path d="M4.5 7.5 H18 L20.6 11 L18 14.5 H4.5 Z" fill="#83beec" stroke="#0f6cbd" stroke-width="1"/><path d="M13.5 7.5 V14.5" stroke="#0f6cbd" stroke-width="1"/><path d="M18.4 6 L29 17 M29 6 L18.4 17" stroke="#f0525a" stroke-width="1.2"/></svg>
<span class="t" style="left:1417px;top:119.69999999999999px;line-height:18px;font-size:12px;font-weight:400;color:#242424;transform:scaleX(0.9993);">削除</span>
<svg style="left:1426.6px;top:141.0px;" width="6.8" height="4.4" viewBox="0 0 6.8 4.4" fill="none"><path d="M1 1 L3.4 3.4 L5.8 1" stroke="#444" stroke-width="1.2" stroke-linecap="round" stroke-linejoin="round"/></svg>
<svg style="left:1459px;top:85px;" width="29" height="27" viewBox="0 0 29 27" fill="none"><path d="M6.6 1.5 H21.8 M6.6 0 V3 M21.8 0 V3" stroke="#2b7cd3" stroke-width="1"/><rect x="0.5" y="5.5" width="27" height="21" fill="#fff" stroke="#3b3b3b" stroke-width="1.1"/><path d="M0.5 12.5 H27.5 M0.5 19.5 H27.5 M7.5 5.5 V26.5 M20.5 5.5 V26.5" stroke="#6e6e6e" stroke-width="1"/><rect x="7.5" y="12.5" width="13" height="7" fill="#83beec" stroke="#0f6cbd" stroke-width="1"/></svg>
<span class="t" style="left:1461px;top:119.69999999999999px;line-height:18px;font-size:12px;font-weight:400;color:#242424;transform:scaleX(0.9993);">書式</span>
<svg style="left:1470.8px;top:141.0px;" width="6.8" height="4.4" viewBox="0 0 6.8 4.4" fill="none"><path d="M1 1 L3.4 3.4 L5.8 1" stroke="#444" stroke-width="1.2" stroke-linecap="round" stroke-linejoin="round"/></svg>
<span class="t" style="left:1418.5px;top:159.5px;line-height:18px;font-size:12px;font-weight:400;color:#444;transform:scaleX(0.8328);">セル</span>
<div style="left:1501px;top:83px;width:1px;height:90px;background:#d4d4d4"></div>
<svg style="left:1515px;top:87px;" width="14" height="15" viewBox="0 0 14 15" fill="none"><path d="M12.6 3 V1 H1 L7 7.5 L1 14 H12.6 V12" stroke="#444" stroke-width="1.1" stroke-linejoin="round"/></svg>
<span class="t" style="left:1533.5px;top:86.2px;line-height:18px;font-size:12px;font-weight:400;color:#242424;transform:scaleX(0.8786);">オート SUM</span>
<svg style="left:1603.6px;top:92.6px;" width="6.8" height="4.4" viewBox="0 0 6.8 4.4" fill="none"><path d="M1 1 L3.4 3.4 L5.8 1" stroke="#444" stroke-width="1.2" stroke-linecap="round" stroke-linejoin="round"/></svg>
<svg style="left:1513.5px;top:113px;" width="17" height="14" viewBox="0 0 17 14" fill="none"><rect x="0.6" y="0.6" width="15" height="12.6" rx="0.8" stroke="#444" stroke-width="1.1"/><path d="M0.6 3 H15.6" stroke="#444" stroke-width="1"/><path d="M8 5 V10.8 M5.6 8.6 L8 11 L10.4 8.6" stroke="#2b88d8" stroke-width="1.2" stroke-linecap="round" stroke-linejoin="round"/></svg>
<span class="t" style="left:1533.5px;top:112.2px;line-height:18px;font-size:12px;font-weight:400;color:#242424;transform:scaleX(0.6710);">フィル</span>
<svg style="left:1563.1999999999998px;top:118.6px;" width="6.8" height="4.4" viewBox="0 0 6.8 4.4" fill="none"><path d="M1 1 L3.4 3.4 L5.8 1" stroke="#444" stroke-width="1.2" stroke-linecap="round" stroke-linejoin="round"/></svg>
<svg style="left:1513px;top:138px;" width="17" height="16" viewBox="0 0 17 16" fill="none"><path d="M9.8 1 L15 6.2 L7 14.5 L1.5 9 Z" stroke="#a349a4" stroke-width="1.2" stroke-linejoin="round" fill="#fff"/><path d="M4.6 6 L10 11.4 L7 14.5 L1.5 9 Z" fill="#c77fd1" stroke="#a349a4" stroke-width="1.2" stroke-linejoin="round"/></svg>
<span class="t" style="left:1533.5px;top:137.7px;line-height:18px;font-size:12px;font-weight:400;color:#242424;transform:scaleX(0.6664);">クリア</span>
<svg style="left:1561.8999999999999px;top:144.3px;" width="6.8" height="4.4" viewBox="0 0 6.8 4.4" fill="none"><path d="M1 1 L3.4 3.4 L5.8 1" stroke="#444" stroke-width="1.2" stroke-linecap="round" stroke-linejoin="round"/></svg>
<span class="t" style="left:1635px;top:81.8px;line-height:24px;font-size:16px;font-weight:400;color:#2b88d8;transform:scaleX(0.9558);">A</span>
<span class="t" style="left:1635px;top:95.8px;line-height:24px;font-size:16px;font-weight:400;color:#444;transform:scaleX(0.9610);">Z</span>
<svg style="left:1646px;top:94px;" width="18" height="17" viewBox="0 0 18 17" fill="none"><path d="M1.3 0.9 H16.5 L10.6 8.6 V15.2 H7.3 V8.6 Z" stroke="#444" stroke-width="1.1" stroke-linejoin="round" fill="#fafafa"/></svg>
<span class="t" style="left:1622.5px;top:119.69999999999999px;line-height:18px;font-size:12px;font-weight:400;color:#242424;transform:scaleX(0.8498);">並べ替えと</span>
<span class="t" style="left:1620px;top:134.2px;line-height:18px;font-size:12px;font-weight:400;color:#242424;transform:scaleX(0.7111);">フィルター</span>
<svg style="left:1667.5px;top:141.0px;" width="6.8" height="4.4" viewBox="0 0 6.8 4.4" fill="none"><path d="M1 1 L3.4 3.4 L5.8 1" stroke="#444" stroke-width="1.2" stroke-linecap="round" stroke-linejoin="round"/></svg>
<svg style="left:1686px;top:87px;" width="30" height="29" viewBox="0 0 30 29" fill="none"><circle cx="19.7" cy="10.5" r="10.2" stroke="#444" stroke-width="1.1" fill="#fafafa"/><path d="M12.4 17.7 L1.4 28.6" stroke="#444" stroke-width="1.2" stroke-linecap="round"/></svg>
<span class="t" style="left:1685px;top:119.69999999999999px;line-height:18px;font-size:12px;font-weight:400;color:#242424;transform:scaleX(0.8885);">検索と</span>
<span class="t" style="left:1683.5px;top:134.2px;line-height:18px;font-size:12px;font-weight:400;color:#242424;transform:scaleX(0.9993);">選択</span>
<svg style="left:1712.0px;top:141.0px;" width="6.8" height="4.4" viewBox="0 0 6.8 4.4" fill="none"><path d="M1 1 L3.4 3.4 L5.8 1" stroke="#444" stroke-width="1.2" stroke-linecap="round" stroke-linejoin="round"/></svg>
<span class="t" style="left:1603.5px;top:159.5px;line-height:18px;font-size:12px;font-weight:400;color:#444;transform:scaleX(0.9993);">編集</span>
<div style="left:1729px;top:83px;width:1px;height:90px;background:#d4d4d4"></div>
<svg style="left:1746px;top:87px;" width="28" height="28" viewBox="0 0 28 28" fill="none"><rect x="0.5" y="0.5" width="27" height="27" stroke="#d83b01" stroke-width="1.1"/><rect x="3.5" y="3.5" width="9" height="9" stroke="#d83b01" stroke-width="1"/><rect x="15.5" y="3.5" width="9" height="9" stroke="#d83b01" stroke-width="1"/><rect x="3.5" y="15.5" width="9" height="9" stroke="#d83b01" stroke-width="1"/><rect x="15.5" y="15.5" width="9" height="9" stroke="#d83b01" stroke-width="1"/></svg>
<span class="t" style="left:1751.5px;top:119.69999999999999px;line-height:18px;font-size:12px;font-weight:400;color:#242424;transform:scaleX(0.7079);">アド</span>
<span class="t" style="left:1751.5px;top:134.2px;line-height:18px;font-size:12px;font-weight:400;color:#242424;transform:scaleX(0.7287);">イン</span>
<span class="t" style="left:1742.5px;top:159.5px;line-height:18px;font-size:12px;font-weight:400;color:#444;transform:scaleX(0.7185);">アドイン</span>
<div style="left:1788px;top:83px;width:1px;height:90px;background:#d4d4d4"></div>
<svg style="left:1804.5px;top:87px;" width="29" height="29" viewBox="0 0 29 29" fill="none"><path d="M0.5 0.5 H27.5 V27.5 H0.5 Z" fill="#fafafa" stroke="#4a4a4a" stroke-width="1.1"/><rect x="1" y="1" width="26" height="3" fill="#c8c8c8"/><path d="M0.5 4 H27.5 M0.5 12 H27.5 M0.5 20 H26 M10 4 V27.5 M19 4 V27.5" stroke="#6e6e6e" stroke-width="1"/><circle cx="13.3" cy="11.7" r="8.8" fill="#fff" stroke="#4a4a4a" stroke-width="1.1"/><rect x="9" y="10.7" width="3" height="4.7" fill="#d0d0d0" stroke="#666" stroke-width="0.8"/><rect x="12" y="6.6" width="3.1" height="8.8" fill="#fff" stroke="#555" stroke-width="0.8"/><rect x="15.1" y="8.4" width="3.1" height="7" fill="#5aa3e6" stroke="#0f6cbd" stroke-width="0.8"/><path d="M19.6 18 L27.5 27.5 V20" fill="#fafafa" stroke="none"/><path d="M19.6 18 L27.6 27.6" stroke="#4a4a4a" stroke-width="1.2"/></svg>
<span class="t" style="left:1805.2px;top:119.69999999999999px;line-height:18px;font-size:12px;font-weight:400;color:#242424;transform:scaleX(0.7830);">データ</span>
<span class="t" style="left:1807px;top:134.2px;line-height:18px;font-size:12px;font-weight:400;color:#242424;transform:scaleX(0.9869);">分析</span>
<div style="left:1849px;top:83px;width:1px;height:90px;background:#d4d4d4"></div>
<svg style="left:1890.5px;top:162.4px;" width="10" height="6" viewBox="0 0 10 6" fill="none"><path d="M1 1 L5.0 5 L9 1" stroke="#333" stroke-width="1.2" stroke-linecap="round" stroke-linejoin="round"/></svg>
<div style="left:0px;top:225px;width:1896px;height:713px;background:#fff"></div>
<div style="left:0px;top:225px;width:1896px;height:24px;background:#f0f0f0;border-bottom:1px solid #9b9b9b"></div>
<div style="left:0px;top:249px;width:32px;height:689px;background:#f0f0f0;border-right:1px solid #a6a6a6"></div>
<svg style="left:0px;top:225px;" width="32" height="23" viewBox="0 0 32 23" fill="none"><path d="M13 19.5 L28 4.5 L28 19.5 Z" fill="#dfdfdf"/></svg>
<div style="left:31px;top:225px;width:1px;height:23px;background:#d0d0d0"></div>
<div style="left:79px;top:225px;width:1px;height:23px;background:#d6d6d6"></div>
<span class="t" style="left:56.0px;top:224.7px;line-height:24px;font-size:16px;font-weight:400;color:#444;transform:translateX(-50%) scaleX(0.8800);">A</span>
<div style="left:289px;top:225px;width:1px;height:23px;background:#d6d6d6"></div>
<span class="t" style="left:185.0px;top:224.7px;line-height:24px;font-size:16px;font-weight:400;color:#444;transform:translateX(-50%) scaleX(0.8800);">B</span>
<div style="left:290px;top:225px;width:448px;height:24px;background:#e0e0e0;border-bottom:2px solid #1e7145;border-right:1px solid #ababab"></div>
<span class="t" style="left:514.0px;top:224.7px;line-height:24px;font-size:16px;font-weight:400;color:#1e7145;transform:translateX(-50%) scaleX(0.8800);">C</span>
<div style="left:829px;top:225px;width:1px;height:23px;background:#d6d6d6"></div>
<span class="t" style="left:784.0px;top:224.7px;line-height:24px;font-size:16px;font-weight:400;color:#444;transform:translateX(-50%) scaleX(0.8800);">D</span>
<div style="left:921px;top:225px;width:1px;height:23px;background:#d6d6d6"></div>
<span class="t" style="left:876.0px;top:224.7px;line-height:24px;font-size:16px;font-weight:400;color:#444;transform:translateX(-50%) scaleX(0.8800);">E</span>
<div style="left:1027px;top:225px;width:1px;height:23px;background:#d6d6d6"></div>
<span class="t" style="left:975.0px;top:224.7px;line-height:24px;font-size:16px;font-weight:400;color:#444;transform:translateX(-50%) scaleX(0.8800);">F</span>
<div style="left:1040px;top:225px;width:1px;height:23px;background:#d6d6d6"></div>
<span class="t" style="left:1034.5px;top:224.7px;line-height:24px;font-size:16px;font-weight:400;color:#444;transform:translateX(-50%) scaleX(0.8800);">G</span>
<div style="left:1141px;top:225px;width:1px;height:23px;background:#d6d6d6"></div>
<span class="t" style="left:1091.5px;top:224.7px;line-height:24px;font-size:16px;font-weight:400;color:#444;transform:translateX(-50%) scaleX(0.8800);">H</span>
<div style="left:1154px;top:225px;width:1px;height:23px;background:#d6d6d6"></div>
<span class="t" style="left:1148.5px;top:224.7px;line-height:24px;font-size:16px;font-weight:400;color:#444;transform:translateX(-50%) scaleX(0.8800);">I</span>
<div style="left:1242px;top:225px;width:1px;height:23px;background:#d6d6d6"></div>
<span class="t" style="left:1199.0px;top:224.7px;line-height:24px;font-size:16px;font-weight:400;color:#444;transform:translateX(-50%) scaleX(0.8800);">J</span>
<div style="left:1255px;top:225px;width:1px;height:23px;background:#d6d6d6"></div>
<span class="t" style="left:1249.5px;top:224.7px;line-height:24px;font-size:16px;font-weight:400;color:#444;transform:translateX(-50%) scaleX(0.8800);">K</span>
<div style="left:1343px;top:225px;width:1px;height:23px;background:#d6d6d6"></div>
<span class="t" style="left:1300.0px;top:224.7px;line-height:24px;font-size:16px;font-weight:400;color:#444;transform:translateX(-50%) scaleX(0.8800);">L</span>
<div style="left:1580px;top:225px;width:1px;height:23px;background:#d6d6d6"></div>
<span class="t" style="left:1462.5px;top:224.7px;line-height:24px;font-size:16px;font-weight:400;color:#444;transform:translateX(-50%) scaleX(0.8800);">M</span>
<div style="left:1593px;top:225px;width:1px;height:23px;background:#d6d6d6"></div>
<span class="t" style="left:1587.5px;top:224.7px;line-height:24px;font-size:16px;font-weight:400;color:#444;transform:translateX(-50%) scaleX(0.8800);">N</span>
<div style="left:1683px;top:225px;width:1px;height:23px;background:#d6d6d6"></div>
<span class="t" style="left:1639.0px;top:224.7px;line-height:24px;font-size:16px;font-weight:400;color:#444;transform:translateX(-50%) scaleX(0.8800);">O</span>
<div style="left:1696px;top:225px;width:1px;height:23px;background:#d6d6d6"></div>
<span class="t" style="left:1690.5px;top:224.7px;line-height:24px;font-size:16px;font-weight:400;color:#444;transform:translateX(-50%) scaleX(0.8800);">P</span>
<div style="left:1768px;top:225px;width:1px;height:23px;background:#d6d6d6"></div>
<span class="t" style="left:1733.0px;top:224.7px;line-height:24px;font-size:16px;font-weight:400;color:#444;transform:translateX(-50%) scaleX(0.8800);">Q</span>
<div style="left:1840px;top:225px;width:1px;height:23px;background:#d6d6d6"></div>
<span class="t" style="left:1805.0px;top:224.7px;line-height:24px;font-size:16px;font-weight:400;color:#444;transform:translateX(-50%) scaleX(0.8800);">R</span>
<span class="t" style="left:1877.0px;top:224.7px;line-height:24px;font-size:16px;font-weight:400;color:#444;transform:translateX(-50%) scaleX(0.8800);">S</span>
<div style="left:0px;top:280px;width:31px;height:1px;background:#e0e0e0"></div>
<span class="t" style="left:15.3px;top:253.60000000000002px;line-height:24px;font-size:16px;font-weight:400;color:#4a4a4a;transform:translateX(-50%) scaleX(0.8700);">1</span>
<div style="left:0px;top:281px;width:32px;height:32px;background:#dfdfdf;border-right:2px solid #1e7145"></div>
<div style="left:0px;top:312px;width:31px;height:1px;background:#e0e0e0"></div>
<span class="t" style="left:15.3px;top:285.6px;line-height:24px;font-size:16px;font-weight:400;color:#1e7145;transform:translateX(-50%) scaleX(0.8700);">2</span>
<div style="left:0px;top:344px;width:31px;height:1px;background:#e0e0e0"></div>
<span class="t" style="left:15.3px;top:317.6px;line-height:24px;font-size:16px;font-weight:400;color:#4a4a4a;transform:translateX(-50%) scaleX(0.8700);">3</span>
<div style="left:0px;top:376px;width:31px;height:1px;background:#e0e0e0"></div>
<span class="t" style="left:15.3px;top:349.6px;line-height:24px;font-size:16px;font-weight:400;color:#4a4a4a;transform:translateX(-50%) scaleX(0.8700);">4</span>
<div style="left:0px;top:408px;width:31px;height:1px;background:#e0e0e0"></div>
<span class="t" style="left:15.3px;top:381.6px;line-height:24px;font-size:16px;font-weight:400;color:#4a4a4a;transform:translateX(-50%) scaleX(0.8700);">5</span>
<div style="left:0px;top:440px;width:31px;height:1px;background:#e0e0e0"></div>
<span class="t" style="left:15.3px;top:413.6px;line-height:24px;font-size:16px;font-weight:400;color:#4a4a4a;transform:translateX(-50%) scaleX(0.8700);">6</span>
<div style="left:0px;top:472px;width:31px;height:1px;background:#e0e0e0"></div>
<span class="t" style="left:15.3px;top:445.6px;line-height:24px;font-size:16px;font-weight:400;color:#4a4a4a;transform:translateX(-50%) scaleX(0.8700);">7</span>
<div style="left:0px;top:504px;width:31px;height:1px;background:#e0e0e0"></div>
<span class="t" style="left:15.3px;top:477.6px;line-height:24px;font-size:16px;font-weight:400;color:#4a4a4a;transform:translateX(-50%) scaleX(0.8700);">8</span>
<div style="left:0px;top:536px;width:31px;height:1px;background:#e0e0e0"></div>
<span class="t" style="left:15.3px;top:509.6px;line-height:24px;font-size:16px;font-weight:400;color:#4a4a4a;transform:translateX(-50%) scaleX(0.8700);">9</span>
<div style="left:0px;top:568px;width:31px;height:1px;background:#e0e0e0"></div>
<span class="t" style="left:15.3px;top:541.6px;line-height:24px;font-size:16px;font-weight:400;color:#4a4a4a;transform:translateX(-50%) scaleX(0.8700);">10</span>
<div style="left:0px;top:600px;width:31px;height:1px;background:#e0e0e0"></div>
<span class="t" style="left:15.3px;top:573.6px;line-height:24px;font-size:16px;font-weight:400;color:#4a4a4a;transform:translateX(-50%) scaleX(0.8700);">11</span>
<div style="left:0px;top:632px;width:31px;height:1px;background:#e0e0e0"></div>
<span class="t" style="left:15.3px;top:605.6px;line-height:24px;font-size:16px;font-weight:400;color:#4a4a4a;transform:translateX(-50%) scaleX(0.8700);">12</span>
<div style="left:0px;top:664px;width:31px;height:1px;background:#e0e0e0"></div>
<span class="t" style="left:15.3px;top:637.6px;line-height:24px;font-size:16px;font-weight:400;color:#4a4a4a;transform:translateX(-50%) scaleX(0.8700);">13</span>
<div style="left:0px;top:696px;width:31px;height:1px;background:#e0e0e0"></div>
<span class="t" style="left:15.3px;top:669.6px;line-height:24px;font-size:16px;font-weight:400;color:#4a4a4a;transform:translateX(-50%) scaleX(0.8700);">14</span>
<div style="left:0px;top:728px;width:31px;height:1px;background:#e0e0e0"></div>
<span class="t" style="left:15.3px;top:701.6px;line-height:24px;font-size:16px;font-weight:400;color:#4a4a4a;transform:translateX(-50%) scaleX(0.8700);">15</span>
<div style="left:0px;top:760px;width:31px;height:1px;background:#e0e0e0"></div>
<span class="t" style="left:15.3px;top:733.6px;line-height:24px;font-size:16px;font-weight:400;color:#4a4a4a;transform:translateX(-50%) scaleX(0.8700);">16</span>
<div style="left:0px;top:792px;width:31px;height:1px;background:#e0e0e0"></div>
<span class="t" style="left:15.3px;top:765.6px;line-height:24px;font-size:16px;font-weight:400;color:#4a4a4a;transform:translateX(-50%) scaleX(0.8700);">17</span>
<div style="left:0px;top:824px;width:31px;height:1px;background:#e0e0e0"></div>
<span class="t" style="left:15.3px;top:797.6px;line-height:24px;font-size:16px;font-weight:400;color:#4a4a4a;transform:translateX(-50%) scaleX(0.8700);">18</span>
<div style="left:0px;top:856px;width:31px;height:1px;background:#e0e0e0"></div>
<span class="t" style="left:15.3px;top:829.6px;line-height:24px;font-size:16px;font-weight:400;color:#4a4a4a;transform:translateX(-50%) scaleX(0.8700);">19</span>
<div style="left:0px;top:888px;width:31px;height:1px;background:#e0e0e0"></div>
<span class="t" style="left:15.3px;top:861.6px;line-height:24px;font-size:16px;font-weight:400;color:#4a4a4a;transform:translateX(-50%) scaleX(0.8700);">20</span>
<div style="left:0px;top:920px;width:31px;height:1px;background:#e0e0e0"></div>
<span class="t" style="left:15.3px;top:893.6px;line-height:24px;font-size:16px;font-weight:400;color:#4a4a4a;transform:translateX(-50%) scaleX(0.8700);">21</span>
<div style="left:0px;top:952px;width:31px;height:1px;background:#e0e0e0"></div>
<span class="t" style="left:15.3px;top:925.6px;line-height:24px;font-size:16px;font-weight:400;color:#4a4a4a;transform:translateX(-50%) scaleX(0.8700);">22</span>
<span class="t" style="left:35.5px;top:251.0px;line-height:28px;font-size:18.67px;font-weight:700;color:#000;transform:scaleX(0.9809);">事件データ</span>
<span class="t" style="left:83px;top:287.0px;line-height:22px;font-size:14.67px;font-weight:700;color:#000;transform:scaleX(1.0162);">事件データベースフォルダ</span>
<span class="t" style="left:83px;top:383.0px;line-height:22px;font-size:14.67px;font-weight:700;color:#000;transform:scaleX(1.0228);">事件アーカイブフォルダ</span>
<span class="t" style="left:83px;top:479.0px;line-height:22px;font-size:14.67px;font-weight:700;color:#000;transform:scaleX(1.0097);">名前データファイル名</span>
<span class="t" style="left:83px;top:575.0px;line-height:22px;font-size:14.67px;font-weight:700;color:#000;transform:scaleX(1.0063);">フォルダデータファイル名</span>
<span class="t" style="left:83px;top:671.0px;line-height:22px;font-size:14.67px;font-weight:700;color:#000;transform:scaleX(1.0158);">データフォルダ確認</span>
<span class="t" style="left:83px;top:767.0px;line-height:22px;font-size:14.67px;font-weight:700;color:#000;transform:scaleX(1.0233);">事件番号確認</span>
<span class="t" style="left:83px;top:863.0px;line-height:22px;font-size:14.67px;font-weight:700;color:#000;transform:scaleX(1.0096);">編集モード</span>
<span class="t" style="left:82px;top:313.0px;line-height:16px;font-size:10.67px;font-weight:400;color:#000;transform:scaleX(1.0375);font-family:'Liberation Sans','Noto Sans CJK JP DemiLight','Noto Sans CJK JP',sans-serif;">事件データのデータベースのフォルダを指定してください。</span>
<span class="t" style="left:82px;top:409.0px;line-height:16px;font-size:10.67px;font-weight:400;color:#000;transform:scaleX(1.0312);font-family:'Liberation Sans','Noto Sans CJK JP DemiLight','Noto Sans CJK JP',sans-serif;">事件データのエクセルファイルを保存するフォルダを指定してください。</span>
<span class="t" style="left:82px;top:505.0px;line-height:16px;font-size:10.67px;font-weight:400;color:#000;transform:scaleX(1.0323);font-family:'Liberation Sans','Noto Sans CJK JP DemiLight','Noto Sans CJK JP',sans-serif;">VAハイライトで使用する名前データのファイル名を指定してください。</span>
<span class="t" style="left:82px;top:601.0px;line-height:16px;font-size:10.67px;font-weight:400;color:#000;transform:scaleX(1.0279);font-family:'Liberation Sans','Noto Sans CJK JP DemiLight','Noto Sans CJK JP',sans-serif;">VAファイル保管で使用する事件フォルダデータのファイル名を指定してください。</span>
<span class="t" style="left:82px;top:697.0px;line-height:16px;font-size:10.67px;font-weight:400;color:#000;transform:scaleX(1.0418);font-family:'Liberation Sans','Noto Sans CJK JP DemiLight','Noto Sans CJK JP',sans-serif;">すべてのデータフォルダの存在を確認します。</span>
<span class="t" style="left:82px;top:793.0px;line-height:16px;font-size:10.67px;font-weight:400;color:#000;transform:scaleX(1.0418);font-family:'Liberation Sans','Noto Sans CJK JP DemiLight','Noto Sans CJK JP',sans-serif;">すべての事件番号の重複と空白を確認します。</span>
<span class="t" style="left:294px;top:671.0px;line-height:22px;font-size:14.67px;font-weight:400;color:#4472c4;transform:scaleX(1.0229);">実行</span>
<span class="t" style="left:294px;top:767.0px;line-height:22px;font-size:14.67px;font-weight:400;color:#4472c4;transform:scaleX(1.0229);">実行</span>
<span class="t" style="left:294px;top:863.0px;line-height:22px;font-size:14.67px;font-weight:400;color:#000;transform:scaleX(0.9547);font-family:'Liberation Sans','Noto Sans CJK JP DemiLight','Noto Sans CJK JP',sans-serif;">入力</span>
<div style="left:290px;top:376px;width:448px;height:33px;border:1px solid #000"></div>
<div style="left:290px;top:472px;width:448px;height:33px;border:1px solid #000"></div>
<div style="left:290px;top:568px;width:448px;height:33px;border:1px solid #000"></div>
<div style="left:289px;top:279px;width:450px;height:35px;border:2px solid #1e7145"></div>
<div style="left:734px;top:309px;width:7px;height:7px;background:#1e7145;border:1px solid #fff"></div>
<span class="t" style="left:833px;top:287.0px;line-height:22px;font-size:14.67px;font-weight:700;color:#000;transform:scaleX(1.0085);">リストアイテム</span>
<span class="t" style="left:832px;top:313.0px;line-height:16px;font-size:10.67px;font-weight:400;color:#000;transform:scaleX(1.0338);font-family:'Liberation Sans','Noto Sans CJK JP DemiLight','Noto Sans CJK JP',sans-serif;">事件シートの選択リストを設定してください。</span>
<div style="left:921px;top:344px;width:107px;height:33px;background:#000"></div>
<span class="t" style="left:974.5px;top:351.3px;line-height:22px;font-size:14.67px;font-weight:700;color:#fff;transform:translateX(-50%) scaleX(0.9959);">現況区分</span>
<div style="left:921px;top:376px;width:107px;height:193px;border:1px solid #000;border-top:none"></div>
<div style="left:921px;top:408px;width:107px;height:1px;background:#000"></div>
<div style="left:921px;top:440px;width:107px;height:1px;background:#000"></div>
<div style="left:921px;top:472px;width:107px;height:1px;background:#000"></div>
<div style="left:921px;top:504px;width:107px;height:1px;background:#000"></div>
<div style="left:921px;top:536px;width:107px;height:1px;background:#000"></div>
<span class="t" style="left:925px;top:382.8px;line-height:22px;font-size:14.67px;font-weight:400;color:#000;font-family:'Liberation Sans','Noto Sans CJK JP DemiLight','Noto Sans CJK JP',sans-serif;">A:未了</span>
<span class="t" style="left:925px;top:414.8px;line-height:22px;font-size:14.67px;font-weight:400;color:#000;font-family:'Liberation Sans','Noto Sans CJK JP DemiLight','Noto Sans CJK JP',sans-serif;">B:終了</span>
<span class="t" style="left:925px;top:446.8px;line-height:22px;font-size:14.67px;font-weight:400;color:#000;font-family:'Liberation Sans','Noto Sans CJK JP DemiLight','Noto Sans CJK JP',sans-serif;">C:相談のみ</span>
<span class="t" style="left:925px;top:478.8px;line-height:22px;font-size:14.67px;font-weight:400;color:#000;font-family:'Liberation Sans','Noto Sans CJK JP DemiLight','Noto Sans CJK JP',sans-serif;">D:相談不可</span>
<span class="t" style="left:925px;top:510.79999999999995px;line-height:22px;font-size:14.67px;font-weight:400;color:#000;font-family:'Liberation Sans','Noto Sans CJK JP DemiLight','Noto Sans CJK JP',sans-serif;">E:精算管理</span>
<svg style="left:1023px;top:564px;" width="4" height="4" viewBox="0 0 4 4" fill="none"><path d="M4 0 L4 4 L0 4 Z" fill="#2f4fa5"/></svg>
<div style="left:1040px;top:344px;width:102px;height:33px;background:#000"></div>
<span class="t" style="left:1091.0px;top:351.3px;line-height:22px;font-size:14.67px;font-weight:700;color:#fff;transform:translateX(-50%) scaleX(0.9959);">受任区分</span>
<div style="left:1040px;top:376px;width:102px;height:161px;border:1px solid #000;border-top:none"></div>
<div style="left:1040px;top:408px;width:102px;height:1px;background:#000"></div>
<div style="left:1040px;top:440px;width:102px;height:1px;background:#000"></div>
<div style="left:1040px;top:472px;width:102px;height:1px;background:#000"></div>
<div style="left:1040px;top:504px;width:102px;height:1px;background:#000"></div>
<span class="t" style="left:1044px;top:382.8px;line-height:22px;font-size:14.67px;font-weight:400;color:#000;font-family:'Liberation Sans','Noto Sans CJK JP DemiLight','Noto Sans CJK JP',sans-serif;">A:事務所</span>
<span class="t" style="left:1044px;top:414.8px;line-height:22px;font-size:14.67px;font-weight:400;color:#000;transform:scaleX(1.0215);font-family:'Liberation Sans','Noto Sans CJK JP DemiLight','Noto Sans CJK JP',sans-serif;">B:個人(愛情)</span>
<span class="t" style="left:1044px;top:446.8px;line-height:22px;font-size:14.67px;font-weight:400;color:#000;transform:scaleX(1.0115);font-family:'Liberation Sans','Noto Sans CJK JP DemiLight','Noto Sans CJK JP',sans-serif;">C:個人(誠実)</span>
<svg style="left:1137px;top:532px;" width="4" height="4" viewBox="0 0 4 4" fill="none"><path d="M4 0 L4 4 L0 4 Z" fill="#2f4fa5"/></svg>
<div style="left:1154px;top:344px;width:89px;height:33px;background:#000"></div>
<span class="t" style="left:1198.5px;top:351.3px;line-height:22px;font-size:14.67px;font-weight:700;color:#fff;transform:translateX(-50%) scaleX(0.9959);">事件区分</span>
<div style="left:1154px;top:376px;width:89px;height:513px;border:1px solid #000;border-top:none"></div>
<div style="left:1154px;top:408px;width:89px;height:1px;background:#000"></div>
<div style="left:1154px;top:440px;width:89px;height:1px;background:#000"></div>
<div style="left:1154px;top:472px;width:89px;height:1px;background:#000"></div>
<div style="left:1154px;top:504px;width:89px;height:1px;background:#000"></div>
<div style="left:1154px;top:536px;width:89px;height:1px;background:#000"></div>
<div style="left:1154px;top:568px;width:89px;height:1px;background:#000"></div>
<div style="left:1154px;top:600px;width:89px;height:1px;background:#000"></div>
<div style="left:1154px;top:632px;width:89px;height:1px;background:#000"></div>
<div style="left:1154px;top:664px;width:89px;height:1px;background:#000"></div>
<div style="left:1154px;top:696px;width:89px;height:1px;background:#000"></div>
<div style="left:1154px;top:728px;width:89px;height:1px;background:#000"></div>
<div style="left:1154px;top:760px;width:89px;height:1px;background:#000"></div>
<div style="left:1154px;top:792px;width:89px;height:1px;background:#000"></div>
<div style="left:1154px;top:824px;width:89px;height:1px;background:#000"></div>
<div style="left:1154px;top:856px;width:89px;height:1px;background:#000"></div>
<span class="t" style="left:1158px;top:382.8px;line-height:22px;font-size:14.67px;font-weight:400;color:#000;font-family:'Liberation Sans','Noto Sans CJK JP DemiLight','Noto Sans CJK JP',sans-serif;">A:管財</span>
<span class="t" style="left:1158px;top:414.8px;line-height:22px;font-size:14.67px;font-weight:400;color:#000;font-family:'Liberation Sans','Noto Sans CJK JP DemiLight','Noto Sans CJK JP',sans-serif;">B:個人一般</span>
<span class="t" style="left:1158px;top:446.8px;line-height:22px;font-size:14.67px;font-weight:400;color:#000;font-family:'Liberation Sans','Noto Sans CJK JP DemiLight','Noto Sans CJK JP',sans-serif;">C:個人債務</span>
<span class="t" style="left:1158px;top:478.8px;line-height:22px;font-size:14.67px;font-weight:400;color:#000;font-family:'Liberation Sans','Noto Sans CJK JP DemiLight','Noto Sans CJK JP',sans-serif;">D:企業</span>
<span class="t" style="left:1158px;top:510.79999999999995px;line-height:22px;font-size:14.67px;font-weight:400;color:#000;font-family:'Liberation Sans','Noto Sans CJK JP DemiLight','Noto Sans CJK JP',sans-serif;">E:顧問</span>
<svg style="left:1238px;top:884px;" width="4" height="4" viewBox="0 0 4 4" fill="none"><path d="M4 0 L4 4 L0 4 Z" fill="#2f4fa5"/></svg>
<div style="left:1255px;top:344px;width:326px;height:33px;background:#000"></div>
<span class="t" style="left:1299.0px;top:351.3px;line-height:22px;font-size:14.67px;font-weight:700;color:#fff;transform:translateX(-50%) scaleX(0.9959);">担当区分</span>
<span class="t" style="left:1462.0px;top:351.3px;line-height:22px;font-size:14.67px;font-weight:700;color:#fff;transform:translateX(-50%) scaleX(0.9960);">担当区分詳細</span>
<div style="left:1255px;top:376px;width:326px;height:257px;border:1px solid #000;border-top:none"></div>
<div style="left:1255px;top:408px;width:326px;height:1px;background:#000"></div>
<div style="left:1255px;top:440px;width:326px;height:1px;background:#000"></div>
<div style="left:1255px;top:472px;width:326px;height:1px;background:#000"></div>
<div style="left:1255px;top:504px;width:326px;height:1px;background:#000"></div>
<div style="left:1255px;top:536px;width:326px;height:1px;background:#000"></div>
<div style="left:1255px;top:568px;width:326px;height:1px;background:#000"></div>
<div style="left:1255px;top:600px;width:326px;height:1px;background:#000"></div>
<div style="left:1343px;top:377px;width:1px;height:256px;background:#000"></div>
<span class="t" style="left:1259px;top:381.3px;line-height:22px;font-size:14.67px;font-weight:400;color:#000;font-family:'Liberation Sans','Noto Sans CJK JP DemiLight','Noto Sans CJK JP',sans-serif;">正義</span>
<span class="t" style="left:1259px;top:412.9px;line-height:22px;font-size:14.67px;font-weight:400;color:#000;font-family:'Liberation Sans','Noto Sans CJK JP DemiLight','Noto Sans CJK JP',sans-serif;">愛情</span>
<span class="t" style="left:1259px;top:446.9px;line-height:22px;font-size:14.67px;font-weight:400;color:#000;font-family:'Liberation Sans','Noto Sans CJK JP DemiLight','Noto Sans CJK JP',sans-serif;">誠実</span>
<span class="t" style="left:1259px;top:476.9px;line-height:22px;font-size:14.67px;font-weight:400;color:#000;transform:scaleX(0.9890);font-family:'Liberation Sans','Noto Sans CJK JP DemiLight','Noto Sans CJK JP',sans-serif;">正・愛</span>
<span class="t" style="left:1259px;top:510.6px;line-height:22px;font-size:14.67px;font-weight:400;color:#000;transform:scaleX(0.9890);font-family:'Liberation Sans','Noto Sans CJK JP DemiLight','Noto Sans CJK JP',sans-serif;">正・誠</span>
<span class="t" style="left:1259px;top:542.2px;line-height:22px;font-size:14.67px;font-weight:400;color:#000;transform:scaleX(0.9890);font-family:'Liberation Sans','Noto Sans CJK JP DemiLight','Noto Sans CJK JP',sans-serif;">愛・誠</span>
<span class="t" style="left:1259px;top:574.6px;line-height:22px;font-size:14.67px;font-weight:400;color:#000;transform:scaleX(1.0028);font-family:'Liberation Sans','Noto Sans CJK JP DemiLight','Noto Sans CJK JP',sans-serif;">正・愛・誠</span>
<svg style="left:1338px;top:628px;" width="4" height="4" viewBox="0 0 4 4" fill="none"><path d="M4 0 L4 4 L0 4 Z" fill="#2f4fa5"/></svg>
<span class="t" style="left:1347px;top:381.3px;line-height:22px;font-size:14.67px;font-weight:400;color:#000;font-family:'Liberation Sans','Noto Sans CJK JP DemiLight','Noto Sans CJK JP',sans-serif;">正義先生</span>
<span class="t" style="left:1347px;top:412.9px;line-height:22px;font-size:14.67px;font-weight:400;color:#000;font-family:'Liberation Sans','Noto Sans CJK JP DemiLight','Noto Sans CJK JP',sans-serif;">愛情先生</span>
<span class="t" style="left:1347px;top:446.9px;line-height:22px;font-size:14.67px;font-weight:400;color:#000;font-family:'Liberation Sans','Noto Sans CJK JP DemiLight','Noto Sans CJK JP',sans-serif;">誠実先生</span>
<span class="t" style="left:1347px;top:476.9px;line-height:22px;font-size:14.67px;font-weight:400;color:#000;transform:scaleX(1.0082);font-family:'Liberation Sans','Noto Sans CJK JP DemiLight','Noto Sans CJK JP',sans-serif;">正義先生・愛情先生</span>
<span class="t" style="left:1347px;top:510.6px;line-height:22px;font-size:14.67px;font-weight:400;color:#000;transform:scaleX(1.0082);font-family:'Liberation Sans','Noto Sans CJK JP DemiLight','Noto Sans CJK JP',sans-serif;">正義先生・誠実先生</span>
<span class="t" style="left:1347px;top:542.2px;line-height:22px;font-size:14.67px;font-weight:400;color:#000;transform:scaleX(1.0082);font-family:'Liberation Sans','Noto Sans CJK JP DemiLight','Noto Sans CJK JP',sans-serif;">愛情先生・誠実先生</span>
<span class="t" style="left:1347px;top:574.6px;line-height:22px;font-size:14.67px;font-weight:400;color:#000;transform:scaleX(1.0136);font-family:'Liberation Sans','Noto Sans CJK JP DemiLight','Noto Sans CJK JP',sans-serif;">正義先生・愛情先生・誠実先生</span>
<svg style="left:1576px;top:628px;" width="4" height="4" viewBox="0 0 4 4" fill="none"><path d="M4 0 L4 4 L0 4 Z" fill="#2f4fa5"/></svg>
<div style="left:1593px;top:344px;width:91px;height:33px;background:#000"></div>
<span class="t" style="left:1638.5px;top:351.3px;line-height:22px;font-size:14.67px;font-weight:700;color:#fff;transform:translateX(-50%) scaleX(0.9959);">依頼人立場</span>
<div style="left:1593px;top:376px;width:91px;height:545px;border:1px solid #000;border-top:none"></div>
<div style="left:1593px;top:408px;width:91px;height:1px;background:#000"></div>
<div style="left:1593px;top:440px;width:91px;height:1px;background:#000"></div>
<div style="left:1593px;top:472px;width:91px;height:1px;background:#000"></div>
<div style="left:1593px;top:504px;width:91px;height:1px;background:#000"></div>
<div style="left:1593px;top:536px;width:91px;height:1px;background:#000"></div>
<div style="left:1593px;top:568px;width:91px;height:1px;background:#000"></div>
<div style="left:1593px;top:600px;width:91px;height:1px;background:#000"></div>
<div style="left:1593px;top:632px;width:91px;height:1px;background:#000"></div>
<div style="left:1593px;top:664px;width:91px;height:1px;background:#000"></div>
<div style="left:1593px;top:696px;width:91px;height:1px;background:#000"></div>
<div style="left:1593px;top:728px;width:91px;height:1px;background:#000"></div>
<div style="left:1593px;top:760px;width:91px;height:1px;background:#000"></div>
<div style="left:1593px;top:792px;width:91px;height:1px;background:#000"></div>
<div style="left:1593px;top:824px;width:91px;height:1px;background:#000"></div>
<div style="left:1593px;top:856px;width:91px;height:1px;background:#000"></div>
<div style="left:1593px;top:888px;width:91px;height:1px;background:#000"></div>
<span class="t" style="left:1597px;top:382.3px;line-height:22px;font-size:14.67px;font-weight:400;color:#000;font-family:'Liberation Sans','Noto Sans CJK JP DemiLight','Noto Sans CJK JP',sans-serif;">原告</span>
<span class="t" style="left:1597px;top:414.5px;line-height:22px;font-size:14.67px;font-weight:400;color:#000;font-family:'Liberation Sans','Noto Sans CJK JP DemiLight','Noto Sans CJK JP',sans-serif;">被告</span>
<span class="t" style="left:1597px;top:444.7px;line-height:22px;font-size:14.67px;font-weight:400;color:#000;font-family:'Liberation Sans','Noto Sans CJK JP DemiLight','Noto Sans CJK JP',sans-serif;">申立人</span>
<span class="t" style="left:1597px;top:476.7px;line-height:22px;font-size:14.67px;font-weight:400;color:#000;font-family:'Liberation Sans','Noto Sans CJK JP DemiLight','Noto Sans CJK JP',sans-serif;">相手方</span>
<span class="t" style="left:1597px;top:508.5px;line-height:22px;font-size:14.67px;font-weight:400;color:#000;font-family:'Liberation Sans','Noto Sans CJK JP DemiLight','Noto Sans CJK JP',sans-serif;">債権者</span>
<span class="t" style="left:1597px;top:540.5px;line-height:22px;font-size:14.67px;font-weight:400;color:#000;font-family:'Liberation Sans','Noto Sans CJK JP DemiLight','Noto Sans CJK JP',sans-serif;">債務者</span>
<span class="t" style="left:1597px;top:572.7px;line-height:22px;font-size:14.67px;font-weight:400;color:#000;font-family:'Liberation Sans','Noto Sans CJK JP DemiLight','Noto Sans CJK JP',sans-serif;">控訴人</span>
<span class="t" style="left:1597px;top:605.7px;line-height:22px;font-size:14.67px;font-weight:400;color:#000;font-family:'Liberation Sans','Noto Sans CJK JP DemiLight','Noto Sans CJK JP',sans-serif;">被控訴人</span>
<span class="t" style="left:1597px;top:636.8px;line-height:22px;font-size:14.67px;font-weight:400;color:#000;font-family:'Liberation Sans','Noto Sans CJK JP DemiLight','Noto Sans CJK JP',sans-serif;">本人</span>
<span class="t" style="left:1597px;top:669.2px;line-height:22px;font-size:14.67px;font-weight:400;color:#000;font-family:'Liberation Sans','Noto Sans CJK JP DemiLight','Noto Sans CJK JP',sans-serif;">被相続人</span>
<span class="t" style="left:1597px;top:701.2px;line-height:22px;font-size:14.67px;font-weight:400;color:#000;font-family:'Liberation Sans','Noto Sans CJK JP DemiLight','Noto Sans CJK JP',sans-serif;">破産者</span>
<span class="t" style="left:1597px;top:733.2px;line-height:22px;font-size:14.67px;font-weight:400;color:#000;font-family:'Liberation Sans','Noto Sans CJK JP DemiLight','Noto Sans CJK JP',sans-serif;">被保佐人</span>
<span class="t" style="left:1597px;top:766.7px;line-height:22px;font-size:14.67px;font-weight:400;color:#000;font-family:'Liberation Sans','Noto Sans CJK JP DemiLight','Noto Sans CJK JP',sans-serif;">被後見人</span>
<span class="t" style="left:1597px;top:797.2px;line-height:22px;font-size:14.67px;font-weight:400;color:#000;font-family:'Liberation Sans','Noto Sans CJK JP DemiLight','Noto Sans CJK JP',sans-serif;">審査請求人</span>
<span class="t" style="left:1597px;top:829.2px;line-height:22px;font-size:14.67px;font-weight:400;color:#000;font-family:'Liberation Sans','Noto Sans CJK JP DemiLight','Noto Sans CJK JP',sans-serif;">請求者</span>
<span class="t" style="left:1597px;top:861.2px;line-height:22px;font-size:14.67px;font-weight:400;color:#000;font-family:'Liberation Sans','Noto Sans CJK JP DemiLight','Noto Sans CJK JP',sans-serif;">申述人</span>
<svg style="left:1679px;top:916px;" width="4" height="4" viewBox="0 0 4 4" fill="none"><path d="M4 0 L4 4 L0 4 Z" fill="#2f4fa5"/></svg>
<div style="left:1010px;top:358px;width:17px;height:17px;background:#f3f3f3;border:1px solid #8a8a8a"></div>
<svg style="left:1014px;top:364px;" width="9" height="6" viewBox="0 0 9 6" fill="none"><path d="M0.5 0.5 L8.5 0.5 L4.5 5 Z" fill="#444"/></svg>
<div style="left:1899px;top:225px;width:17px;height:713px;background:#f5f5f5;border-radius:8px 8px 0 0"></div>
<svg style="left:1900.5px;top:229.2px;" width="14" height="9" viewBox="0 0 14 9" fill="none"><path d="M7 1 Q7.7 1 8.2 1.7 L11.7 6.4 Q12.2 7.4 11.2 7.4 L2.8 7.4 Q1.8 7.4 2.3 6.4 L5.8 1.7 Q6.3 1 7 1 Z" fill="#6e6e6e"/></svg>
<div style="left:1903px;top:242px;width:9px;height:383px;background:#6e6e6e;border-radius:4.5px"></div>
</body></html>
